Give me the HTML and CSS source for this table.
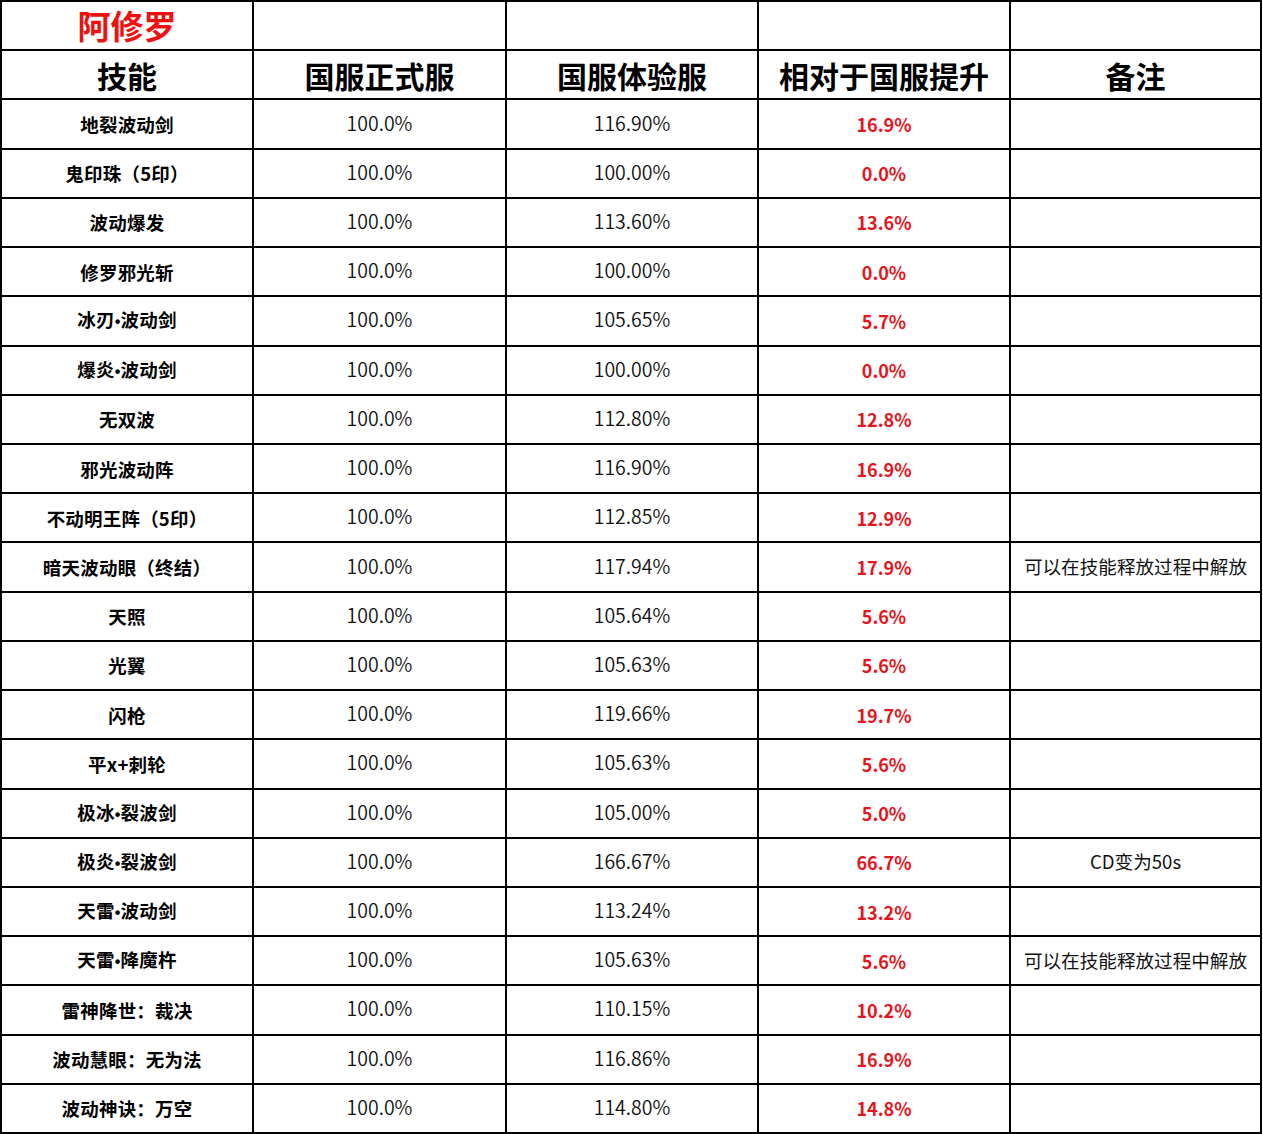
FILE: index.html
```html
<!DOCTYPE html>
<html lang="zh-CN">
<head>
<meta charset="utf-8">
<title>阿修罗</title>
<link rel="stylesheet" href="styles.css">
</head>
<body>
<table class="sheet">
  <colgroup>
    <col class="c1"><col class="c2"><col class="c3"><col class="c4"><col class="c5">
  </colgroup>
  <tbody>
    <tr class="row"><td class="title">阿修罗</td><td></td><td></td><td></td><td></td></tr>
    <tr class="row head"><td>技能</td><td>国服正式服</td><td>国服体验服</td><td>相对于国服提升</td><td>备注</td></tr>
    <tr class="row"><td class="name">地裂波动剑</td><td class="num">100.0%</td><td class="num">116.90%</td><td class="up">16.9%</td><td class="note"></td></tr>
    <tr class="row"><td class="name">鬼印珠（5印）</td><td class="num">100.0%</td><td class="num">100.00%</td><td class="up">0.0%</td><td class="note"></td></tr>
    <tr class="row"><td class="name">波动爆发</td><td class="num">100.0%</td><td class="num">113.60%</td><td class="up">13.6%</td><td class="note"></td></tr>
    <tr class="row"><td class="name">修罗邪光斩</td><td class="num">100.0%</td><td class="num">100.00%</td><td class="up">0.0%</td><td class="note"></td></tr>
    <tr class="row"><td class="name">冰刃<span class="dot">•</span>波动剑</td><td class="num">100.0%</td><td class="num">105.65%</td><td class="up">5.7%</td><td class="note"></td></tr>
    <tr class="row"><td class="name">爆炎<span class="dot">•</span>波动剑</td><td class="num">100.0%</td><td class="num">100.00%</td><td class="up">0.0%</td><td class="note"></td></tr>
    <tr class="row"><td class="name">无双波</td><td class="num">100.0%</td><td class="num">112.80%</td><td class="up">12.8%</td><td class="note"></td></tr>
    <tr class="row"><td class="name">邪光波动阵</td><td class="num">100.0%</td><td class="num">116.90%</td><td class="up">16.9%</td><td class="note"></td></tr>
    <tr class="row"><td class="name">不动明王阵（5印）</td><td class="num">100.0%</td><td class="num">112.85%</td><td class="up">12.9%</td><td class="note"></td></tr>
    <tr class="row"><td class="name">暗天波动眼（终结）</td><td class="num">100.0%</td><td class="num">117.94%</td><td class="up">17.9%</td><td class="note">可以在技能释放过程中解放</td></tr>
    <tr class="row"><td class="name">天照</td><td class="num">100.0%</td><td class="num">105.64%</td><td class="up">5.6%</td><td class="note"></td></tr>
    <tr class="row"><td class="name">光翼</td><td class="num">100.0%</td><td class="num">105.63%</td><td class="up">5.6%</td><td class="note"></td></tr>
    <tr class="row"><td class="name">闪枪</td><td class="num">100.0%</td><td class="num">119.66%</td><td class="up">19.7%</td><td class="note"></td></tr>
    <tr class="row"><td class="name">平x+刺轮</td><td class="num">100.0%</td><td class="num">105.63%</td><td class="up">5.6%</td><td class="note"></td></tr>
    <tr class="row"><td class="name">极冰<span class="dot">•</span>裂波剑</td><td class="num">100.0%</td><td class="num">105.00%</td><td class="up">5.0%</td><td class="note"></td></tr>
    <tr class="row"><td class="name">极炎<span class="dot">•</span>裂波剑</td><td class="num">100.0%</td><td class="num">166.67%</td><td class="up">66.7%</td><td class="note">CD变为50s</td></tr>
    <tr class="row"><td class="name">天雷<span class="dot">•</span>波动剑</td><td class="num">100.0%</td><td class="num">113.24%</td><td class="up">13.2%</td><td class="note"></td></tr>
    <tr class="row"><td class="name">天雷<span class="dot">•</span>降魔杵</td><td class="num">100.0%</td><td class="num">105.63%</td><td class="up">5.6%</td><td class="note">可以在技能释放过程中解放</td></tr>
    <tr class="row"><td class="name">雷神降世：裁决</td><td class="num">100.0%</td><td class="num">110.15%</td><td class="up">10.2%</td><td class="note"></td></tr>
    <tr class="row"><td class="name">波动慧眼：无为法</td><td class="num">100.0%</td><td class="num">116.86%</td><td class="up">16.9%</td><td class="note"></td></tr>
    <tr class="row"><td class="name">波动神诀：万空</td><td class="num">100.0%</td><td class="num">114.80%</td><td class="up">14.8%</td><td class="note"></td></tr>
  </tbody>
</table>
</body>
</html>
```
FILE: styles.css
```css
html, body {
  margin: 0;
  padding: 0;
  background: #ffffff;
}
body {
  font-family: "Noto Sans CJK SC", "Noto Sans", sans-serif;
  color: #000;
}
.sheet {
  border-collapse: collapse;
  table-layout: fixed;
  width: 1260px;
  margin: 0;
}
.c1 { width: 252px; }
.c2 { width: 253px; }
.c3 { width: 252px; }
.c4 { width: 252px; }
.c5 { width: 251px; }
.sheet td {
  border: 2px solid #000;
  padding: 0;
  line-height: 28px;
  text-align: center;
  vertical-align: middle;
  overflow: hidden;
  white-space: nowrap;
}
.row { height: 49.22px; }
.sheet td.title {
  color: #f01010;
  font-weight: 700;
  font-size: 33px;
  line-height: 34px;
  padding-bottom: 1px;
}
.head td {
  font-weight: 700;
  font-size: 30px;
}
.sheet .head td { line-height: 32px; }
.name {
  font-weight: 700;
  font-size: 18.5px;
  letter-spacing: 0.2px;
}
.dot {
  font-family: "Liberation Sans", "DejaVu Sans", sans-serif;
  font-weight: 700;
  font-size: 16px;
}
.sheet td.num {
  font-weight: 350;
  font-size: 19.5px;
  color: #111;
  padding-bottom: 3px;
}
.up {
  font-weight: 700;
  font-size: 18px;
  color: #e8141b;
}
.sheet td.note {
  font-weight: 400;
  font-size: 18.6px;
  color: #111;
  padding-bottom: 2px;
}
```
